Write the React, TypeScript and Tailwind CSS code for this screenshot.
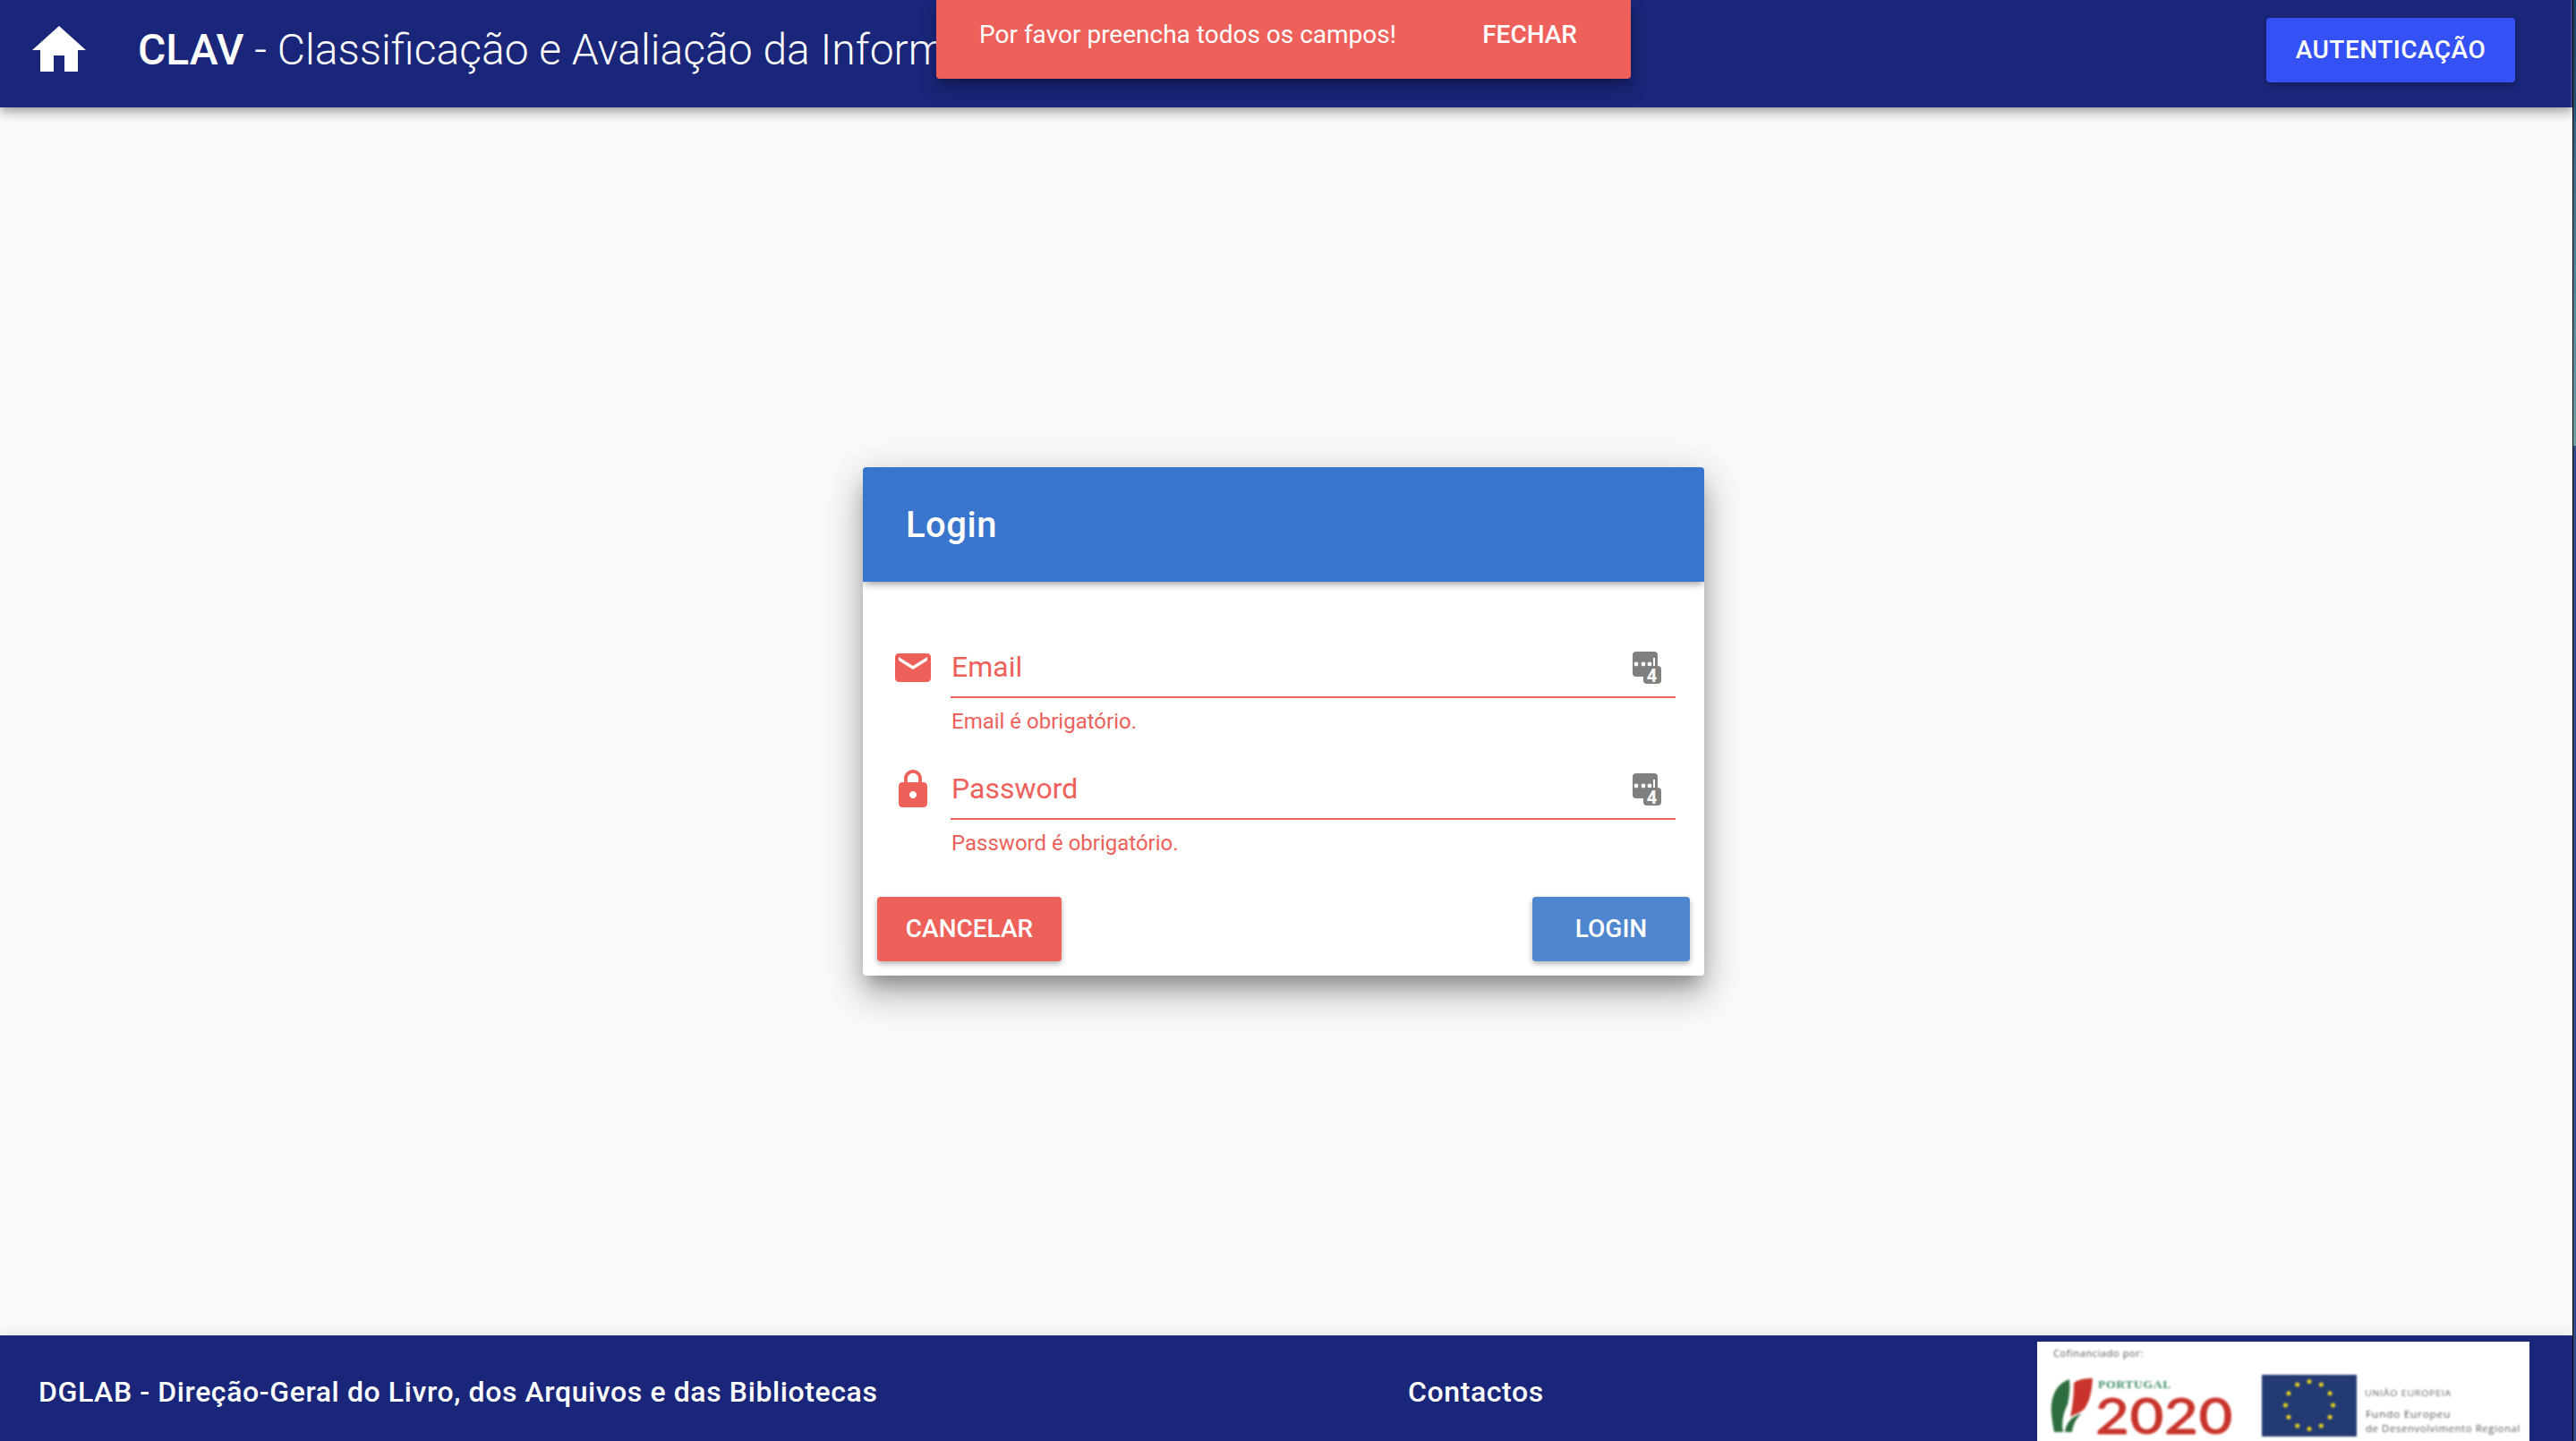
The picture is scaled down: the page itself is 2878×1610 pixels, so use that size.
const roboto = 'font-[Roboto,sans-serif]';

function KeyIcon() {
  return (
    <svg width="32" height="36" viewBox="0 0 32 36" className="mt-[6px] shrink-0 overflow-visible">
      <rect x="0" y="0" width="28" height="28" rx="4" fill="#808080" />
      <circle cx="4" cy="14" r="2.4" fill="#fff" />
      <circle cx="12" cy="14" r="2.4" fill="#fff" />
      <circle cx="19" cy="14" r="2.4" fill="#fff" />
      <rect x="23" y="7" width="2" height="10" fill="#fff" />
      <rect x="12" y="16" width="20" height="20" rx="4" fill="#808080" />
      <text x="21.5" y="34" textAnchor="middle" fontSize="20" fontWeight="700" fill="#fff" fontFamily="Roboto, sans-serif">
        4
      </text>
    </svg>
  );
}

function MailIcon() {
  return (
    <svg width="48" height="48" viewBox="0 0 24 24" fill="#ee605a" className="shrink-0">
      <path d="M20 4H4c-1.1 0-1.99.9-1.99 2L2 18c0 1.1.9 2 2 2h16c1.1 0 2-.9 2-2V6c0-1.1-.9-2-2-2zm0 4l-8 5-8-5V6l8 5 8-5v2z" />
    </svg>
  );
}

function LockIcon() {
  return (
    <svg width="48" height="48" viewBox="0 0 24 24" fill="#ee605a" className="shrink-0">
      <path d="M18 8h-1V6c0-2.76-2.24-5-5-5S7 3.24 7 6v2H6c-1.1 0-2 .9-2 2v10c0 1.1.9 2 2 2h12c1.1 0 2-.9 2-2V10c0-1.1-.9-2-2-2zm-6 9c-1.1 0-2-.9-2-2s.9-2 2-2 2 .9 2 2-.9 2-2 2zm3.1-9H8.9V6c0-1.71 1.39-3.1 3.1-3.1 1.71 0 3.1 1.39 3.1 3.1v2z" />
    </svg>
  );
}

function Field({ icon, label, error }: { icon: React.ReactNode; label: string; error: string }) {
  return (
    <div className="flex h-[136px] gap-[18px]">
      {icon}
      <div className="flex-1">
        <div className="flex h-[58px] items-start justify-between border-b-2 border-[#ee605a] pr-[16px]">
          <span className="pl-px text-[32px] leading-[46px] text-[#ee605a]">{label}</span>
          <KeyIcon />
        </div>
        <p className="mt-[12px] pl-px text-[24px] leading-[28px] text-[#ee605a]">{error}</p>
      </div>
    </div>
  );
}

function CofinancedLogos() {
  const stars = Array.from({ length: 12 }, (_, i) => {
    const a = (i * Math.PI) / 6;
    return { cx: 304 + 26.6 * Math.sin(a), cy: 71 - 26.6 * Math.cos(a) };
  });
  return (
    <div className="h-[111px] w-[550px] overflow-hidden bg-white">
      <svg width="550" height="111" viewBox="0 0 550 111" className="blur-[1px]">
        <text x="18" y="17" fontSize="11" fill="#555" fontFamily="Open Sans, sans-serif">
          Cofinanciado por:
        </text>
        <path d="M36 42C25 46 18 54 16 70c-1 9 1 20 3 31h10c-2-10 0-21 5-31 2-9 3-18 2-28z" fill="#2c6e3f" />
        <path d="M62 41c-9 0-16 1-21 5 0 11-1 25-4 38 5-3 10-4 15-8 6-7 9-19 10-35z" fill="#c8342b" />
        <path d="M31 101c1-9 6-17 19-21-7 6-10 13-11 21z" fill="#2c6e3f" />
        <text x="68" y="52" fontSize="11.5" fontWeight="700" fill="#3d8b63" fontFamily="Liberation Serif, serif" textLength="82" lengthAdjust="spacingAndGlyphs">
          PORTUGAL
        </text>
        <text x="65" y="103" fontSize="56" fill="#c8342b" stroke="#c8342b" strokeWidth="0.8" fontFamily="Lato, sans-serif" textLength="154" lengthAdjust="spacingAndGlyphs">
          2020
        </text>
        <rect x="251" y="37" width="106" height="69" fill="#233a72" />
        {stars.map((s, i) => (
          <circle key={i} cx={s.cx} cy={s.cy} r="2.5" fill="#e8d21d" />
        ))}
        <text x="366" y="61" fontSize="8.5" fill="#666" fontFamily="Open Sans, sans-serif" textLength="97" lengthAdjust="spacingAndGlyphs">
          UNIÃO EUROPEIA
        </text>
        <text x="367" y="85" fontSize="10" fill="#555" fontFamily="Open Sans, sans-serif" textLength="95" lengthAdjust="spacingAndGlyphs">
          Fundo  Europeu
        </text>
        <text x="367" y="101" fontSize="10" fill="#555" fontFamily="Open Sans, sans-serif" textLength="173" lengthAdjust="spacingAndGlyphs">
          de Desenvolvimento Regional
        </text>
      </svg>
    </div>
  );
}

export default function App() {
  return (
    <div className={`relative flex h-[1610px] overflow-hidden bg-[#fafafa] ${roboto}`}>
      <div className="flex min-w-0 flex-1 flex-col">
        {/* Toolbar */}
        <header className="z-10 flex h-[120px] shrink-0 items-center justify-between border-r-2 border-[#39438f] bg-[#1a2679] pl-[30px] pr-[62px] shadow-[0_4px_8px_-2px_rgba(0,0,0,0.2),0_8px_10px_0_rgba(0,0,0,0.14),0_2px_20px_0_rgba(0,0,0,0.12)]">
          <div className="flex items-center gap-[52px]">
            <svg width="72" height="72" viewBox="0 0 24 24" fill="#fff" className="-mt-[8px] shrink-0">
              <path d="M10 20v-6h4v6h5v-8h3L12 3 2 12h3v8z" />
            </svg>
            <h1 className="-mt-[8px] whitespace-nowrap text-[48px] leading-none font-light text-white">
              <span className="font-medium">CLAV</span> - Classificação e Avaliação da Informação
            </h1>
          </div>
          <button className="-mt-[8px] flex h-[72px] w-[278px] items-center justify-center rounded-[4px] bg-[#3451f5] text-[28px] font-medium tracking-[0.5px] text-white shadow-[0_3px_6px_rgba(0,0,0,0.25)]">
            AUTENTICAÇÃO
          </button>
        </header>

        {/* Login */}
        <main className="flex flex-1 items-center justify-center pr-[6px]">
          <div className="w-[940px] overflow-hidden rounded-[4px] bg-white shadow-[0_14px_20px_-6px_rgba(0,0,0,0.3),0_24px_38px_3px_rgba(0,0,0,0.14),0_10px_46px_8px_rgba(0,0,0,0.12)]">
            <div className="flex h-[128px] items-center bg-[#3975cc] pl-[48px] pt-[2px] text-[40px] font-medium tracking-[0.5px] text-white shadow-[0_4px_8px_-2px_rgba(0,0,0,0.3),0_4px_8px_0_rgba(0,0,0,0.1)]">
              Login
            </div>
            <div className="px-[32px] pt-[72px]">
              <Field icon={<MailIcon />} label="Email" error="Email é obrigatório." />
              <Field icon={<LockIcon />} label="Password" error="Password é obrigatório." />
            </div>
            <div className="flex justify-between px-[16px] pb-[16px] pt-[8px]">
              <button className="flex h-[72px] w-[206px] items-center justify-center rounded-[4px] bg-[#ee605a] text-[28px] font-medium text-white shadow-[0_3px_6px_rgba(0,0,0,0.3)]">
                CANCELAR
              </button>
              <button className="flex h-[72px] w-[176px] items-center justify-center rounded-[4px] bg-[#4f86d0] text-[28px] font-medium text-white shadow-[0_3px_6px_rgba(0,0,0,0.3)]">
                LOGIN
              </button>
            </div>
          </div>
        </main>

        {/* Footer */}
        <footer className="flex h-[118px] shrink-0 items-end justify-between bg-[#1a2679] pl-[43px] pr-[48px] text-[32px] font-medium tracking-[0.6px] text-white shadow-[0_-4px_16px_rgba(0,0,0,0.08)]">
          <span className="mb-[31px] w-[1530px] whitespace-nowrap">DGLAB - Direção-Geral do Livro, dos Arquivos e das Bibliotecas</span>
          <span className="mb-[31px] mr-auto">Contactos</span>
          <CofinancedLogos />
        </footer>
      </div>

      {/* Window edge with the desktop behind it */}
      <div className="flex w-[4px] shrink-0 flex-col border-l border-black">
        <div className="h-[498px] bg-linear-to-b from-[#1d4a70] to-[#6fa3a8]" />
        <div className="flex-1 bg-[#2f4a85]" />
      </div>

      {/* Snackbar */}
      <div className="absolute left-[1046px] top-0 z-20 flex h-[88px] w-[776px] items-center justify-between rounded-b-[4px] bg-[#ee605a] pl-[48px] pr-[60px] text-[28px] text-white shadow-[0_6px_10px_-2px_rgba(0,0,0,0.25),0_12px_20px_2px_rgba(0,0,0,0.14)]">
        <span className="-mt-[10px]">Por favor preencha todos os campos!</span>
        <span className="-mt-[10px] font-medium">FECHAR</span>
      </div>
    </div>
  );
}
